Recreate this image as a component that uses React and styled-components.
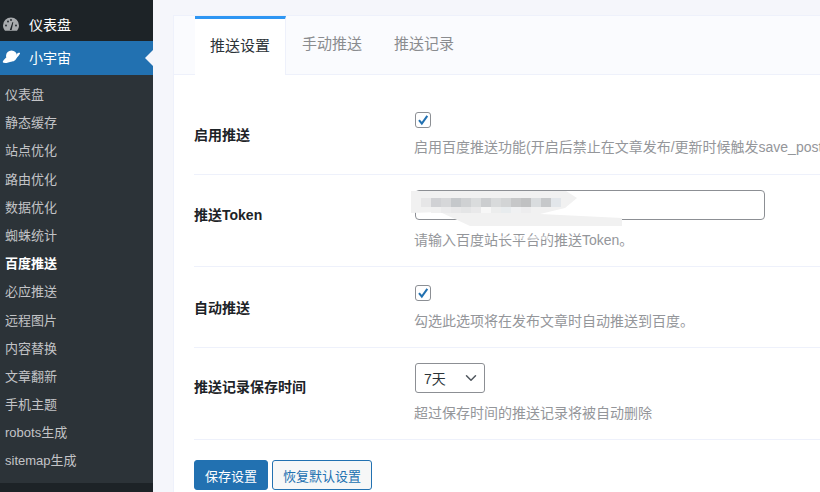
import React from "react";
import styled, { createGlobalStyle } from "styled-components";
import { ChevronDown } from "lucide-react";

const GlobalStyle = createGlobalStyle`
  html, body {
    margin: 0;
    padding: 0;
    height: 492px;
    overflow: hidden;
    background: #f5f6fb;
    font-family: "Liberation Sans", "Noto Sans CJK SC", sans-serif;
  }
`;

const Page = styled.div`
  display: flex;
  width: 820px;
  height: 492px;
  overflow: hidden;
`;

const Sidebar = styled.nav`
  width: 153px;
  flex: none;
  background: #1d2327;
  display: flex;
  flex-direction: column;
`;

const TopItem = styled.div`
  position: relative;
  display: flex;
  align-items: center;
  height: ${(p) => (p.$active ? 34 : 41)}px;
  padding-left: 1px;
  gap: 8px;
  box-sizing: border-box;
  color: #fff;
  font-size: 14px;
  background: ${(p) => (p.$active ? "#2271b1" : "transparent")};
  padding-top: ${(p) => (p.$active ? 0 : 7)}px;
  padding-bottom: ${(p) => (p.$active ? 2 : 1)}px;
  &::after {
    content: "";
    display: ${(p) => (p.$active ? "block" : "none")};
    position: absolute;
    right: 0;
    top: 9px;
    border: 8px solid transparent;
    border-right-color: #f5f6fb;
    border-left-width: 0;
  }
`;

const SubMenu = styled.ul`
  list-style: none;
  margin: 0;
  padding: 6px 0 7px;
  background: #2c3338;
`;

const SubItem = styled.li`
  height: 28.2px;
  line-height: 28px;
  padding-left: 5px;
  font-size: 13px;
  color: ${(p) => (p.$current ? "#fff" : "#c3c4c7")};
  font-weight: ${(p) => (p.$current ? 700 : 400)};
`;

const Main = styled.main`
  flex: 1;
  min-width: 0;
  padding: 15px 0 0 20px;
`;

const Card = styled.section`
  width: 700px;
  height: 520px;
  background: #fff;
  border: 1px solid #eef1fb;
`;

const Tabs = styled.div`
  display: flex;
  height: 58px;
  padding-left: 21px;
  background: #fafbfe;
  border-bottom: 1px solid #eef1fb;
`;

const Tab = styled.div`
  width: ${(p) => (p.$active ? 91 : 92)}px;
  box-sizing: border-box;
  height: ${(p) => (p.$active ? 59 : 58)}px;
  padding-bottom: ${(p) => (p.$active ? 6 : 5)}px;
  display: flex;
  align-items: center;
  justify-content: center;
  font-size: 15px;
  color: ${(p) => (p.$active ? "#2c3338" : "#8a8c8f")};
  background: ${(p) => (p.$active ? "#fff" : "transparent")};
  border-top: ${(p) => (p.$active ? "3px solid #2e96f3" : "none")};
  border-right: ${(p) => (p.$active ? "1px solid #eef1fb" : "none")};
`;

const Form = styled.div`
  padding: 19px 0 0 20px;
`;

const Row = styled.div`
  display: flex;
  align-items: center;
  height: ${(p) => p.$height}px;
  border-bottom: 1px solid #eef1fb;
  box-sizing: border-box;
`;

const Label = styled.label`
  width: 220px;
  flex: none;
  font-size: 14px;
  font-weight: 700;
  color: #1d2327;
  margin-bottom: ${(p) => p.$lift || 0}px;
`;

const Field = styled.div`
  position: relative;
  flex: 1;
  min-width: 0;
  white-space: nowrap;
  margin-bottom: ${(p) => p.$lift || 0}px;
`;

const Control = styled.div`
  display: flex;
  align-items: center;
  padding-left: 1px;
  height: ${(p) => p.$height || 30}px;
  margin-bottom: ${(p) => p.$gap || 11}px;
`;

const CheckBox = styled.span`
  display: flex;
  align-items: center;
  justify-content: center;
  width: 14px;
  height: 14px;
  border: 1px solid #8c8f94;
  border-radius: 3px;
  background: #fff;
  color: #2271b1;
`;

const TextInput = styled.div`
  width: 350px;
  height: 30px;
  box-sizing: border-box;
  border: 1px solid #8c8f94;
  border-radius: 4px;
  background: #fff;
`;

const Select = styled.div`
  display: flex;
  align-items: center;
  justify-content: space-between;
  width: 70px;
  height: 30px;
  box-sizing: border-box;
  padding: 0 4px 0 8px;
  border: 1px solid #8c8f94;
  border-radius: 3px;
  font-size: 14px;
  color: #2c3338;
`;

const Hint = styled.p`
  margin: 0;
  font-size: 14px;
  line-height: 18px;
  color: #94969a;
`;

const Smudge = styled.svg`
  position: absolute;
  left: -3px;
  top: 0;
`;

const Actions = styled.div`
  display: flex;
  gap: 4px;
  padding-top: 20px;
`;

const Button = styled.button`
  height: 30px;
  box-sizing: border-box;
  padding: 0 10px;
  border: 1px solid #2271b1;
  border-radius: 3px;
  font-family: inherit;
  font-size: 13px;
  color: ${(p) => (p.$primary ? "#fff" : "#2271b1")};
  background: ${(p) => (p.$primary ? "#2271b1" : "#f6f7f7")};
`;

const subItems = [
  "仪表盘",
  "静态缓存",
  "站点优化",
  "路由优化",
  "数据优化",
  "蜘蛛统计",
  "百度推送",
  "必应推送",
  "远程图片",
  "内容替换",
  "文章翻新",
  "手机主题",
  "robots生成",
  "sitemap生成",
];

// grey levels of the mosaic over the token, left to right
const topBlocks = ["#e6e6e7", "#d0d1d4", "#d6d7d9", "#c5c8cb", "#cfd1d3", "#dadcdd", "#cbcdcf", "#d8dadb", "#d2d4d5", "#c6c7c8", "#c0c1c2", "#d9dcde", "#c6c8ca", "#e2e6ea"];
const lowBlocks = ["#f0f0f0", "#ebebec", "#e8e8e9", "#e4e5e6", "#e9e9ea", "#f7f7f7", "#eceded", "#e8ecee", "#f0f1f2", "#ededee"];

const GaugeIcon = () => (
  <svg width="20" height="20" viewBox="0 0 20 20" fill="#a7aaad">
    <path d="M10 3.500a8 8 0 0 0-8 8c0 2 .8 3.800 2 5.200h12c1.200-1.400 2-3.200 2-5.200a8 8 0 0 0-8-8z" />
    <path d="M8.800 16l2.700-8 .8.300L10.600 16z" fill="#1d2327" />
    <circle cx="5" cy="11.500" r=".9" fill="#1d2327" />
    <circle cx="7" cy="7.500" r=".9" fill="#1d2327" />
    <circle cx="10" cy="6" r=".9" fill="#1d2327" />
    <circle cx="15" cy="11.500" r=".9" fill="#1d2327" />
  </svg>
);

const PlanetIcon = () => (
  <svg width="20" height="20" viewBox="0 0 20 20" fill="#fff">
    <circle cx="10.500" cy="9" r="5.500" />
    <path d="M2 15.500c-1-1 2-4 3.500-5.300.3 1 .9 1.800 1.600 2.400 2 1.300 6.500-1 8.900-4.500-1-.2 0-1.500 1-2.100 1.500-.5 2.500-.2 1.800 1-1.500 2.700-4.500 5.400-8 7.200-3.400 1.700-7.500 2.300-8.800 1.300z" />
  </svg>
);

const CheckIcon = () => (
  <svg width="12" height="12" viewBox="0 0 12 12">
    <path d="M2 6.200L4.800 9.500L10.300 1.800" fill="none" stroke="currentColor" strokeWidth="2" />
  </svg>
);

// blurred-out token in the reference
const TokenSmudge = () => (
  <Smudge width="215" height="60" viewBox="0 0 215 60">
    <path d="M0 1H155L166 8L154 18L129 24L211 28V36H59L29 22L0 23z" fill="#f1f1f1" />
    {topBlocks.map((color, i) => (
      <rect key={i} x={10 + i * 10} y="8" width="10" height="9" fill={color} />
    ))}
    {lowBlocks.map((color, i) => (
      <rect key={i} x={20 + i * 10} y="17" width="10" height="6" fill={color} />
    ))}
    <rect x="90" y="46" width="50" height="3" fill="#fff" opacity="0.5" />
  </Smudge>
);

export default function App() {
  return (
    <Page>
      <GlobalStyle />
      <Sidebar>
        <TopItem>
          <GaugeIcon />
          仪表盘
        </TopItem>
        <TopItem $active>
          <PlanetIcon />
          小宇宙
        </TopItem>
        <SubMenu>
          {subItems.map((item) => (
            <SubItem key={item} $current={item === "百度推送"}>
              {item}
            </SubItem>
          ))}
        </SubMenu>
      </Sidebar>
      <Main>
        <Card>
          <Tabs>
            <Tab $active>推送设置</Tab>
            <Tab>手动推送</Tab>
            <Tab>推送记录</Tab>
          </Tabs>
          <Form>
            <Row $height={81}>
              <Label>启用推送</Label>
              <Field>
                <Control $height={16} $gap={10}>
                  <CheckBox>
                    <CheckIcon />
                  </CheckBox>
                </Control>
                <Hint>启用百度推送功能(开启后禁止在文章发布/更新时候触发save_post</Hint>
              </Field>
            </Row>
            <Row $height={92}>
              <Label $lift={13}>推送Token</Label>
              <Field $lift={2}>
                <Control>
                  <TextInput />
                </Control>
                <TokenSmudge />
                <Hint>请输入百度站长平台的推送Token。</Hint>
              </Field>
            </Row>
            <Row $height={81}>
              <Label>自动推送</Label>
              <Field>
                <Control $height={16} $gap={11}>
                  <CheckBox>
                    <CheckIcon />
                  </CheckBox>
                </Control>
                <Hint>勾选此选项将在发布文章时自动推送到百度。</Hint>
              </Field>
            </Row>
            <Row $height={92}>
              <Label $lift={15}>推送记录保存时间</Label>
              <Field $lift={2}>
                <Control>
                  <Select>
                    7天
                    <ChevronDown size={18} strokeWidth={2} color="#50575e" />
                  </Select>
                </Control>
                <Hint>超过保存时间的推送记录将被自动删除</Hint>
              </Field>
            </Row>
            <Actions>
              <Button $primary>保存设置</Button>
              <Button>恢复默认设置</Button>
            </Actions>
          </Form>
        </Card>
      </Main>
    </Page>
  );
}
